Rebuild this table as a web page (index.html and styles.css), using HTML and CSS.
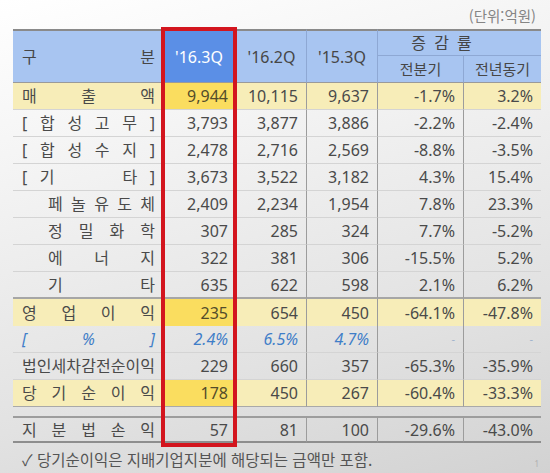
FILE: index.html
```html
<!DOCTYPE html>
<html lang="ko">
<head>
<meta charset="utf-8">
<title>실적</title>
<link rel="stylesheet" href="styles.css">
</head>
<body>
<div class="page">
  <div class="unit">(단위:억원)</div>
  <div class="wrap">
    <table class="fin">
      <colgroup>
        <col class="c-label"><col class="c-cur"><col class="c-q2"><col class="c-q3"><col class="c-qoq"><col class="c-yoy">
      </colgroup>
      <thead>
        <tr class="h1">
          <th rowspan="2" class="lab"><span class="dist"><span>구</span><span>분</span></span></th>
          <th rowspan="2" class="cur">'16.3Q</th>
          <th rowspan="2" class="q2">'16.2Q</th>
          <th rowspan="2" class="q3">'15.3Q</th>
          <th colspan="2" class="grp">증 감 률</th>
        </tr>
        <tr class="h2">
          <th class="qoq">전분기</th>
          <th class="yoy">전년동기</th>
        </tr>
      </thead>
      <tbody>
        <tr class="hl">
          <td class="lab"><span class="dist"><span>매</span><span>출</span><span>액</span></span></td>
          <td class="cur">9,944</td><td class="q2">10,115</td><td class="q3">9,637</td><td class="qoq">-1.7%</td><td class="yoy">3.2%</td>
        </tr>
        <tr>
          <td class="lab"><span class="dist"><span>[</span><span>합</span><span>성</span><span>고</span><span>무</span><span>]</span></span></td>
          <td class="cur">3,793</td><td class="q2">3,877</td><td class="q3">3,886</td><td class="qoq">-2.2%</td><td class="yoy">-2.4%</td>
        </tr>
        <tr>
          <td class="lab"><span class="dist"><span>[</span><span>합</span><span>성</span><span>수</span><span>지</span><span>]</span></span></td>
          <td class="cur">2,478</td><td class="q2">2,716</td><td class="q3">2,569</td><td class="qoq">-8.8%</td><td class="yoy">-3.5%</td>
        </tr>
        <tr>
          <td class="lab"><span class="dist"><span>[</span><span>기</span><span class="sp"></span><span class="sp"></span><span>타</span><span>]</span></span></td>
          <td class="cur">3,673</td><td class="q2">3,522</td><td class="q3">3,182</td><td class="qoq">4.3%</td><td class="yoy">15.4%</td>
        </tr>
        <tr>
          <td class="lab sub"><span class="dist"><span>페</span><span>놀</span><span>유</span><span>도</span><span>체</span></span></td>
          <td class="cur">2,409</td><td class="q2">2,234</td><td class="q3">1,954</td><td class="qoq">7.8%</td><td class="yoy">23.3%</td>
        </tr>
        <tr>
          <td class="lab sub"><span class="dist"><span>정</span><span>밀</span><span>화</span><span>학</span></span></td>
          <td class="cur">307</td><td class="q2">285</td><td class="q3">324</td><td class="qoq">7.7%</td><td class="yoy">-5.2%</td>
        </tr>
        <tr>
          <td class="lab sub"><span class="dist"><span>에</span><span>너</span><span>지</span></span></td>
          <td class="cur">322</td><td class="q2">381</td><td class="q3">306</td><td class="qoq">-15.5%</td><td class="yoy">5.2%</td>
        </tr>
        <tr class="endsec">
          <td class="lab sub"><span class="dist"><span>기</span><span>타</span></span></td>
          <td class="cur">635</td><td class="q2">622</td><td class="q3">598</td><td class="qoq">2.1%</td><td class="yoy">6.2%</td>
        </tr>
        <tr class="hl op">
          <td class="lab"><span class="dist"><span>영</span><span>업</span><span>이</span><span>익</span></span></td>
          <td class="cur">235</td><td class="q2">654</td><td class="q3">450</td><td class="qoq">-64.1%</td><td class="yoy">-47.8%</td>
        </tr>
        <tr class="pct">
          <td class="lab"><span class="dist"><span>[</span><span>%</span><span>]</span></span></td>
          <td class="cur">2.4%</td><td class="q2">6.5%</td><td class="q3">4.7%</td><td class="qoq dash">-</td><td class="yoy dash">-</td>
        </tr>
        <tr>
          <td class="lab"><span class="dist"><span>법</span><span>인</span><span>세</span><span>차</span><span>감</span><span>전</span><span>순</span><span>이</span><span>익</span></span></td>
          <td class="cur">229</td><td class="q2">660</td><td class="q3">357</td><td class="qoq">-65.3%</td><td class="yoy">-35.9%</td>
        </tr>
        <tr class="hl net">
          <td class="lab"><span class="dist"><span>당</span><span>기</span><span>순</span><span>이</span><span>익</span></span></td>
          <td class="cur">178</td><td class="q2">450</td><td class="q3">267</td><td class="qoq">-60.4%</td><td class="yoy">-33.3%</td>
        </tr>
        <tr class="gap"><td colspan="6"></td></tr>
        <tr class="last">
          <td class="lab"><span class="dist"><span>지</span><span>분</span><span>법</span><span>손</span><span>익</span></span></td>
          <td class="cur">57</td><td class="q2">81</td><td class="q3">100</td><td class="qoq">-29.6%</td><td class="yoy">-43.0%</td>
        </tr>
      </tbody>
    </table>
    <div class="redbox"></div>
  </div>
  <div class="foot">
    <span class="note">✓ 당기순이익은 지배기업지분에 해당되는 금액만 포함.</span>
    <span class="pageno">1</span>
  </div>
</div>
</body>
</html>
```

FILE: styles.css
```css
* { box-sizing: border-box; }
html, body { margin: 0; }
body {
  width: 550px;
  height: 473px;
  overflow: hidden;
  background: linear-gradient(165deg, #ffffff 0%, #f3f3f3 30%, #e2e2e2 70%, #d2d2d2 100%);
  font-family: "Noto Sans", "Noto Sans CJK KR", sans-serif;
  color: #4a4a4a;
}
.page { padding: 0 9px 0 13px; }
.unit {
  height: 29px;
  padding: 7px 5px 0 0;
  text-align: right;
  font-size: 14.5px;
  line-height: 18px;
  color: #858585;
  font-family: "Noto Sans CJK KR", sans-serif;
}
.wrap { position: relative; }
.fin {
  width: 528px;
  table-layout: fixed;
  border-collapse: separate;
  border-spacing: 0;
  font-size: 16px;
}
.c-label { width: 148px; }
.c-cur { width: 76px; }
.c-q2 { width: 69px; }
.c-q3 { width: 71px; }
.c-qoq { width: 86px; }
.c-yoy { width: 78px; }

.fin th, .fin td {
  padding: 0 8px 0 0;
  line-height: 20px;
  white-space: nowrap;
}
.fin th {
  font-weight: 400;
  background: #a8c5f1;
  color: #464646;
  text-align: center;
  padding: 0;
}
.h1 { height: 27px; }
.h2 { height: 27px; }
.h1 th { border-top: 2px solid #8a8a8a; }
.h1 th[rowspan] { border-bottom: 1px solid #9a9a9a; }
.h2 th { border-bottom: 1px solid #9a9a9a; font-size: 15px; }
.fin th.q3, .fin th.grp, .fin th.qoq, .fin th.yoy { border-left: 1px solid #8ea8d4; }
.fin th.grp { border-bottom: 1px solid #8ea8d4; padding-right: 34px; letter-spacing: 2px; }
.fin th.cur { background: #5b8fe6; color: #ffffff; }
.fin th.lab { padding: 0 6px 0 9px; }

.fin tbody tr { height: 27px; }
.fin td {
  text-align: right;
  border-bottom: 1px solid #d4d4d4;
}
.fin td.cur { padding-right: 9px; }
.fin td.q3, .fin td.qoq, .fin td.yoy { border-left: 1px solid #9c9c9c; }
.fin td.lab { padding: 0 6px 0 9px; text-align: left; }
.fin td.sub { padding-left: 35px; }

.dist { display: flex; justify-content: space-between; align-items: center; }
.dist .sp { width: 15px; }

.hl td { background: #f7edb8; }
.hl td.cur { background: #fadd5f; color: #534c2a; }

.endsec td { border-bottom: 2px solid #a6a6a6; }
.op td { border-bottom: 0; }

.pct td { color: #3f7ec8; font-style: italic; }
.pct td.dash { color: #9fb2cc; font-size: 11px; font-style: normal; }

.net td { border-bottom: 1px solid #a9a9a9; }
.gap { height: 9px !important; }
.gap td { border: 0; background: transparent; padding: 0; line-height: 0; }
.last td { border-top: 2px solid #9d9d9d; border-bottom: 2px solid #8e8e8e; }

.redbox {
  position: absolute;
  left: 148px;
  top: -2px;
  width: 76px;
  bottom: -4px;
  border: 4px solid #d3151e;
  pointer-events: none;
}

.foot {
  display: flex;
  justify-content: space-between;
  align-items: flex-end;
  margin-top: 7px;
  padding-left: 9px;
}
.note {
  font-family: "Noto Sans CJK KR", sans-serif;
  font-size: 15.5px;
  line-height: 19px;
  color: #545454;
}
.pageno { font-size: 8px; color: #b0b0b0; line-height: 10px; padding-right: 2px; }
```
